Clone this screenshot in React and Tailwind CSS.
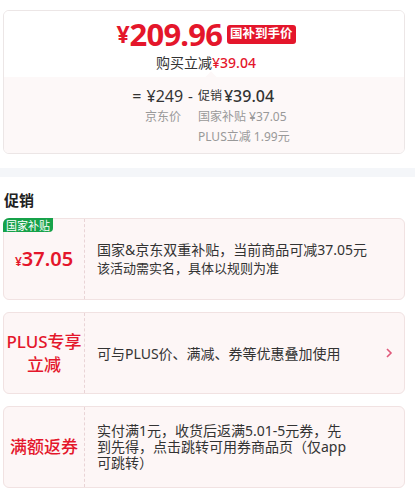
import React from 'react'

const RED = 'text-[#e4162b]'

function PromoCard({ label, badge, children, arrow, textClass = '' }) {
  return (
    <div className="relative mx-[3px] w-[402px] h-[82px] flex rounded-md border border-[#f1e2e2] bg-[#fdf6f6]">
      {badge && (
        <div className="absolute -left-px -top-px h-[14px] px-[3px] flex items-center rounded-tl-md rounded-br-sm bg-[#17a24a] text-[11px] leading-none text-white">
          {badge}
        </div>
      )}
      <div className="w-[81px] shrink-0 flex items-center justify-center border-r border-dashed border-[#e9d4d6]">
        {label}
      </div>
      <div className={`flex-1 flex items-center pl-[12px] ${textClass}`}>{children}</div>
      {arrow && (
        <div className="w-[30px] flex items-center justify-center">
          <svg width="8" height="12" viewBox="0 0 8 12">
            <path d="M2 2l4 4-4 4" fill="none" stroke="#e0587a" strokeWidth="1.6" />
          </svg>
        </div>
      )}
    </div>
  )
}

export default function App() {
  return (
    <div
      className="w-[415px] h-[504px] bg-white text-[#333] overflow-hidden"
      style={{ fontFamily: '"Noto Sans", "Noto Sans CJK SC", sans-serif' }}
    >
      {/* Price summary */}
      <div className="pt-[10px]">
        <div className="mx-[3px] w-[402px] h-[144px] rounded-md border border-[#ece6e6] overflow-hidden flex flex-col">
          <div className="h-[66px] bg-white flex flex-col items-center pt-[10px] pl-[4px]">
            <div className="flex items-center h-[26px]">
              <span className={`${RED} font-bold text-[23px] leading-none`}>¥</span>
              <span className={`${RED} font-bold text-[31px] leading-none tracking-[-0.8px]`}>209.96</span>
              <span className="ml-[5px] h-[19px] px-[3px] flex items-center rounded-[3px] bg-[#e4162b] text-white font-bold text-[12.5px] leading-none">
                国补到手价
              </span>
            </div>
            <div className="mt-[7px] text-[14px] leading-[17px]">
              购买立减<span className={`${RED} font-medium`}>¥39.04</span>
            </div>
          </div>
          <div className="relative flex-1 bg-[#fdf8f8] flex justify-center pt-[8px] pl-[14px]">
            <div className="absolute -top-[4px] left-[203px] w-[8px] h-[8px] rotate-45 bg-[#fdf8f8]" />
            <div className="flex items-start">
              <div className="flex flex-col items-end">
                <div className="h-[22px] flex items-center text-[16px] text-[#333]">
                  <span className="mr-[5px]">=</span>
                  <span>¥249</span>
                </div>
                <div className="h-[20px] flex items-center pr-[2px] text-[12px] text-[#999]">京东价</div>
              </div>
              <div className="h-[22px] flex items-center mx-[5px] text-[15px]">-</div>
              <div className="flex flex-col">
                <div className="h-[22px] flex items-center">
                  <span className="text-[12px] mr-[2px]">促销</span>
                  <span className="text-[16px] font-medium">¥39.04</span>
                </div>
                <div className="h-[20px] flex items-center text-[12px] text-[#999]">国家补贴 ¥37.05</div>
                <div className="h-[20px] flex items-center text-[12px] text-[#999]">PLUS立减 1.99元</div>
              </div>
            </div>
          </div>
        </div>
      </div>

      {/* Divider band */}
      <div className="mt-[14px] h-[9px] bg-[#f4f6f9]" />

      {/* Promotions */}
      <div className="h-[41px] flex items-center pl-[4px] pt-[5px] text-[15px] font-bold text-[#222]">促销</div>

      <div className="flex flex-col gap-[12px]">
        <PromoCard
          badge="国家补贴"
          label={
            <span className={`${RED} font-semibold`}>
              <span className="text-[12px]">¥</span>
              <span className="text-[20px]">37.05</span>
            </span>
          }
        >
          <div>
            <div className="text-[14px] leading-[19px]">国家&京东双重补贴，当前商品可减37.05元</div>
            <div className="text-[13px] leading-[19px]">该活动需实名，具体以规则为准</div>
          </div>
        </PromoCard>

        <PromoCard
          arrow
          label={
            <div className={`${RED} font-medium text-[17px] leading-[23px] text-center`}>
              PLUS专享
              <br />
              立减
            </div>
          }
        >
          <div className="text-[14px] leading-[19px]">可与PLUS价、满减、券等优惠叠加使用</div>
        </PromoCard>

        <PromoCard
          label={<div className={`${RED} font-medium text-[17px]`}>满额返券</div>}
          textClass="pr-[50px]"
        >
          <div className="text-[14px] leading-[16px]">
            实付满1元，收货后返满5.01-5元券，先到先得，点击跳转可用券商品页（仅app可跳转）
          </div>
        </PromoCard>
      </div>
    </div>
  )
}
